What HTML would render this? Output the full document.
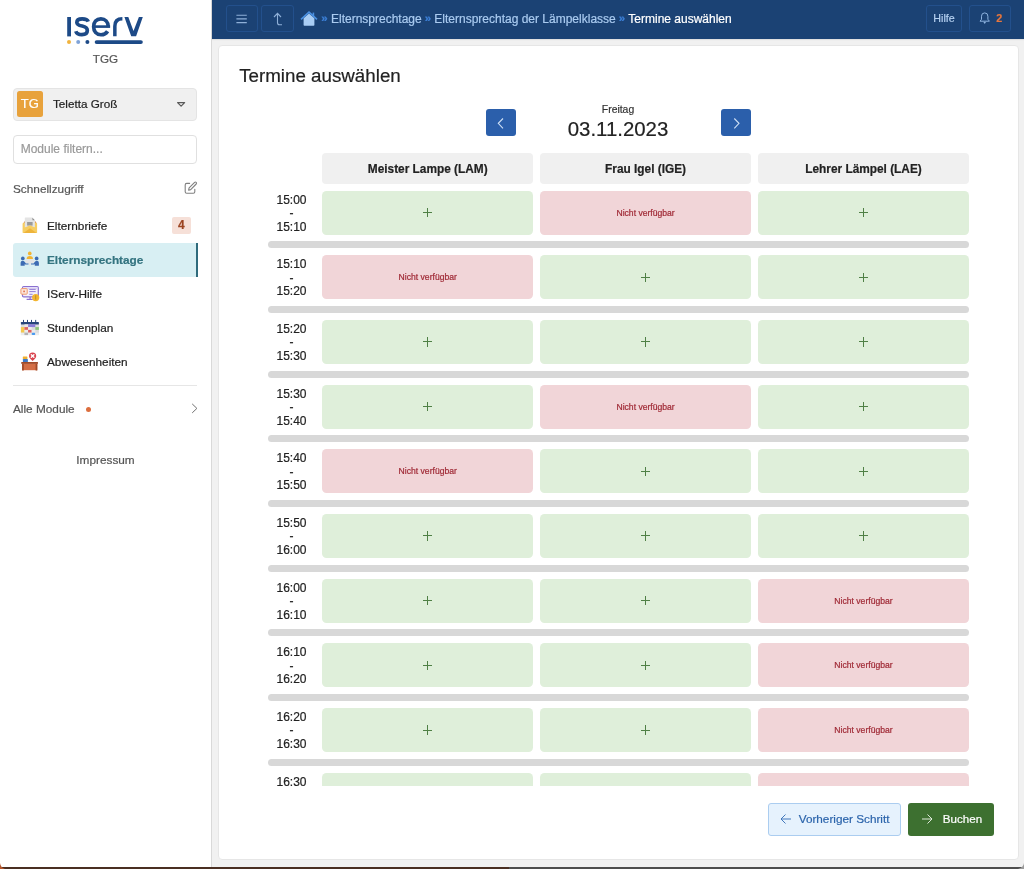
<!DOCTYPE html>
<html><head><meta charset="utf-8">
<style>
*{box-sizing:border-box;margin:0;padding:0}
html,body{width:1024px;height:869px;overflow:hidden;background:#f1f1f1;font-family:"Liberation Sans",sans-serif;color:#222}
body *{-webkit-text-stroke:0.2px currentColor}
.abs{position:absolute}
#side{position:absolute;left:0;top:0;width:212px;height:869px;background:#fff;border-right:1px solid #d9d9d9}
#top{position:absolute;left:212px;top:0;width:812px;height:38.8px;background:#1b4274;box-shadow:0 1px 1px rgba(0,0,0,0.07)}
.tbtn{position:absolute;top:5.2px;height:27.2px;border:1px solid #23508c;border-radius:3px}
#card{position:absolute;left:217.7px;top:44.6px;width:801.3px;height:815.4px;background:#fff;border:1px solid #e6e6e6;border-radius:4px}
.hd{position:absolute;top:153.2px;height:30.6px;background:#f0f0f0;border-radius:4px;font-weight:bold;font-size:11.85px;text-align:center;line-height:32.6px;color:#222}
.cell{position:absolute;height:44.3px;border-radius:4.5px;text-align:center;line-height:44.3px}
.g{background:#dfefda}
.r{background:#f1d5d8;color:#a02a36;font-size:8.6px}
.plus{position:absolute;left:50%;top:50%;width:9.2px;height:9.4px;margin-left:-4.6px;margin-top:-4.7px}
.plus:before{content:"";position:absolute;left:0;top:4.2px;width:9.2px;height:1px;background:#4f8045}
.plus:after{content:"";position:absolute;left:4.1px;top:0;width:1px;height:9.4px;background:#4f8045}
.sep{position:absolute;left:267.6px;width:701.4px;height:6.95px;background:#d8d8d8;border-radius:4px}
.tl{position:absolute;left:262px;width:59px;text-align:center;font-size:12px;line-height:13.6px;padding-top:3px;color:#222}
#clip{position:absolute;left:0;top:0;width:1024px;height:786.4px;overflow:hidden}
.nav{position:absolute;left:13px;width:184.5px;height:34px;font-size:11.8px;line-height:34px}
.nav .t{position:absolute;left:34px;top:0}
.nav svg{position:absolute;left:9px;top:9.5px}
.side-t{position:absolute;font-size:11.8px;color:#555}
.bc{position:absolute;top:10.5px;font-size:12px;line-height:16px;white-space:nowrap}
</style></head><body><div id="wrap" style="position:absolute;left:0;top:0;width:1024px;height:869px;will-change:transform">

<div id="side">
  <!-- logo -->
  <svg class="abs" style="left:60px;top:10px" width="90" height="40" viewBox="60 10 90 40">
    <rect x="67.2" y="17" width="3.8" height="19.4" fill="#1d4a87"/>
    <g fill="none" stroke="#1d4a87" stroke-width="3.7">
      <path d="M88.2 21.6 C87.5 19.7 85.4 18.85 82.2 18.85 C78.9 18.85 76.85 20.2 76.85 22.4 C76.85 24.7 79.3 25.4 82.2 26 C85.6 26.7 87.3 27.8 87.3 30.5 C87.3 33.3 85 34.6 81.9 34.6 C78.6 34.6 76.5 33.4 75.8 31.2"/>
      <path d="M108.2 27.2 V26.6 C108.2 21.9 105.2 18.85 100.9 18.85 C96.4 18.85 93.65 22.2 93.65 26.8 C93.65 31.5 96.6 34.75 101 34.75 C104 34.75 106.2 33.5 107.6 31.2"/>
      <path d="M114.85 36.3 V26.2 C114.85 21.1 117.4 18.8 122.4 18.8" stroke-width="3.5"/>
    </g>
    <rect x="93.6" y="25.3" width="16.5" height="2.6" fill="#1d4a87"/>
    <path d="M124.4 17.1 H128.3 L133.5 30.9 L138.9 17.1 H142.8 L136.1 36.3 H131.2 Z" fill="#1d4a87"/>
    <line x1="96.6" y1="42.1" x2="140.9" y2="42.1" stroke="#1d4a87" stroke-width="3.8" stroke-linecap="round"/>
    <circle cx="69" cy="42.1" r="2" fill="#f1b33d"/>
    <circle cx="78.2" cy="42.1" r="2" fill="#7fa3d8"/>
    <circle cx="87.4" cy="42.1" r="2" fill="#1d4a87"/>
  </svg>
  <div class="side-t" style="left:0;width:211px;text-align:center;top:52px;font-size:11.7px;color:#555">TGG</div>

  <div class="abs" style="left:13.2px;top:87.5px;width:184.3px;height:33.6px;background:#f0f0f0;border:1px solid #e4e4e4;border-radius:4px"></div>
  <div class="abs" style="left:16.9px;top:91.1px;width:25.8px;height:25.8px;background:#e8a23c;border-radius:2.5px;color:#fff;font-size:13px;line-height:26.6px;text-align:center">TG</div>
  <div class="abs" style="left:53px;top:97px;font-size:11.7px;color:#222">Teletta Groß</div>
  <svg class="abs" style="left:172px;top:96px" width="18" height="16" viewBox="172 96 18 16"><path d="M177.6 102.6 H184.6 L181.1 106.1 Z" fill="none" stroke="#5a5a5a" stroke-width="1.25" stroke-linejoin="round"/></svg>

  <div class="abs" style="left:13.1px;top:134.5px;width:184.4px;height:29.3px;border:1px solid #e0e0e0;border-radius:4px"></div>
  <div class="abs" style="left:20.7px;top:142.4px;font-size:12px;color:#9a9a9a">Module filtern...</div>

  <div class="side-t" style="left:13px;top:182px">Schnellzugriff</div>
  <svg class="abs" style="left:180px;top:178px" width="20" height="20" viewBox="180 178 20 20"><g fill="none" stroke="#808080" stroke-width="1.1" stroke-linecap="round" stroke-linejoin="round"><path d="M189.6 183.4 H186.7 Q185.2 183.4 185.2 184.9 V191.7 Q185.2 193.2 186.7 193.2 H193.3 Q194.8 193.2 194.8 191.7 V189.2"/><path d="M188.6 190.2 L189.1 187.9 L194.6 182.4 Q195.4 181.7 196.2 182.4 Q196.9 183.2 196.2 184 L190.7 189.6 Z"/></g></svg>

  <!-- nav -->
  <div class="nav" style="top:208.5px">
    <span class="t">Elternbriefe</span>
    <div class="abs" style="left:159.2px;top:8.6px;width:18.4px;height:16.6px;background:#f6e0d8;border-radius:2px;color:#9c4522;font-weight:bold;font-size:12px;line-height:16.6px;text-align:center">4</div>
  </div>
  <div class="nav" style="top:242.5px;background:#d8eff3;border-radius:3px 0 0 3px;border-right:2px solid #2f6b7c;color:#347480;font-weight:bold">
    <span class="t">Elternsprechtage</span>
  </div>
  <div class="nav" style="top:276.5px">
    <span class="t">IServ-Hilfe</span>
  </div>
  <div class="nav" style="top:310.5px">
    <span class="t">Stundenplan</span>
  </div>
  <div class="nav" style="top:344.5px">
    <span class="t">Abwesenheiten</span>
  </div>

  <svg class="abs" style="left:0;top:200px;z-index:2" width="50" height="180" viewBox="0 200 50 180">
  <!-- envelope -->
  <path d="M22.6 223.5 L25 221.5 H35 L37.1 223.5 V232.6 Q37.1 233.1 36.6 233.1 H23.1 Q22.6 233.1 22.6 232.6Z" fill="#f6cd62"/>
  <path d="M23.9 222.6 L24.8 221.8 M35.2 221.8 L36.2 222.6" stroke="#c0573a" stroke-width="0.9"/>
  <path d="M24.8 218.4 Q24.5 217.6 25.4 217.6 H32.5 L34.9 220 V227.5 H24.8Z" fill="#e4e4e4"/>
  <path d="M32.3 217.8 L34.8 220.3 L32.6 220.3Z" fill="#8a8a8a"/>
  <rect x="27.1" y="222" width="5.5" height="3.6" fill="#9a9a9a"/>
  <path d="M22.9 228.5 L30 225.2 L37 228.5 V233 H23Z" fill="#f6cd62"/>
  <path d="M23.5 233 L30 228.2 L36.5 233Z" fill="#eeb43a"/>
  <!-- group -->
  <circle cx="29.75" cy="253.4" r="1.85" fill="#f2b331"/>
  <path d="M26.6 259.1 Q26.6 256 29.8 256 Q33 256 33 259.1Z" fill="#f2b331"/>
  <ellipse cx="29.75" cy="261.2" rx="4.8" ry="2.3" fill="#e4e4e4"/>
  <rect x="29.2" y="262" width="1.1" height="3.7" fill="#e4e4e4"/>
  <circle cx="22.8" cy="258.4" r="1.85" fill="#3d6bb3"/>
  <circle cx="36.65" cy="258.4" r="1.85" fill="#3d6bb3"/>
  <path d="M20.6 265.7 V262.7 Q20.6 260.7 22.8 260.7 Q24.2 260.7 25.2 262.4 L25.9 263.4 H28.5 V264.6 H25.2 L24.7 264 V265.7Z" fill="#3d6bb3"/>
  <path d="M38.9 265.7 V262.7 Q38.9 260.7 36.7 260.7 Q35.3 260.7 34.3 262.4 L33.6 263.4 H31 V264.6 H34.3 L34.8 264 V265.7Z" fill="#3d6bb3"/>
  <!-- iserv hilfe -->
  <rect x="22.5" y="286.5" width="15.8" height="10.4" rx="1.2" fill="#f3f0fb" stroke="#8a70d0" stroke-width="1.2"/>
  <rect x="23.5" y="287.4" width="14" height="1.8" fill="#dcd3f3"/>
  <path d="M29.3 289.4 H35.7 M29.3 291.6 H35.7 M29.3 294.3 H32.6" stroke="#8a70d0" stroke-width="0.9"/>
  <rect x="20.9" y="288.6" width="6.3" height="5.6" rx="0.8" fill="#fbe6dc" stroke="#ef9a6c" stroke-width="1"/>
  <rect x="23.2" y="290.6" width="1.8" height="1.6" fill="#e37a5a"/>
  <path d="M30.1 297 V298.9 M26.6 299.4 H32.8" stroke="#8a70d0" stroke-width="1.2"/>
  <circle cx="35.7" cy="297.6" r="3.6" fill="#f3b52f"/>
  <path d="M35.7 295.3 V299.6" stroke="#b08a30" stroke-width="0.9"/>
  <!-- stundenplan -->
  <rect x="20.9" y="324.3" width="18" height="10.8" fill="#dcdcdc"/>
  <rect x="20.9" y="321.9" width="18" height="2.5" rx="0.5" fill="#27447a"/>
  <path d="M23.5 319.9 V322 M27.5 319.9 V322 M31.5 319.9 V322 M35.7 319.9 V322" stroke="#27447a" stroke-width="1"/>
  <rect x="24.5" y="324.3" width="3.6" height="2.8" fill="#e8e8e8"/>
  <rect x="28.1" y="324.3" width="7.2" height="2.8" fill="#8a7cd8"/>
  <rect x="20.9" y="327.1" width="3.6" height="5.6" fill="#f4c84e"/>
  <rect x="24.5" y="327.1" width="3.6" height="2.8" fill="#e06060"/>
  <rect x="28.1" y="327.1" width="3.6" height="2.8" fill="#ececec"/>
  <rect x="35.3" y="327.1" width="3.6" height="2.8" fill="#8cc67a"/>
  <rect x="24.5" y="329.9" width="3.6" height="2.8" fill="#ececec"/>
  <rect x="28.1" y="329.9" width="3.6" height="2.8" fill="#e06060"/>
  <rect x="31.7" y="329.9" width="3.6" height="2.8" fill="#ececec"/>
  <rect x="20.9" y="332.7" width="3.6" height="2.4" fill="#ececec"/>
  <rect x="24.5" y="332.7" width="3.6" height="2.4" fill="#b4b4b4"/>
  <rect x="28.1" y="332.7" width="3.6" height="2.4" fill="#ececec"/>
  <rect x="31.7" y="332.7" width="3.6" height="2.4" rx="1" fill="#4a9af0"/>
  <rect x="35.3" y="332.7" width="3.6" height="2.4" fill="#ececec"/>
  <!-- abwesenheiten -->
  <rect x="22.1" y="363.9" width="15.2" height="6.3" fill="#d46e45"/>
  <rect x="22.1" y="363.9" width="1.7" height="6.6" fill="#a04a28"/>
  <rect x="35.6" y="363.9" width="1.7" height="6.6" fill="#a04a28"/>
  <rect x="21.3" y="362" width="16.6" height="1.9" fill="#a04a28"/>
  <rect x="22.8" y="356.5" width="4.6" height="2.5" rx="0.6" fill="#f0b030"/>
  <rect x="22.9" y="359" width="5" height="3.1" rx="0.6" fill="#3d7ac8"/>
  <path d="M29 356 A3.6 3.6 0 1 1 36.2 356 Q36.2 358.2 32.6 360.9 Q29 358.2 29 356Z" fill="#d9434e"/>
  <path d="M31.3 354.7 L33.9 357.3 M33.9 354.7 L31.3 357.3" stroke="#fff" stroke-width="1.4" stroke-linecap="round"/>
</svg>
  <div class="abs" style="left:13px;top:385.3px;width:184.4px;height:1px;background:#e6e6e6"></div>
  <div class="side-t" style="left:13px;top:402px">Alle Module</div>
  <div class="abs" style="left:86.3px;top:406.8px;width:5px;height:5px;border-radius:50%;background:#dc6e3e"></div>
  <svg class="abs" style="left:188px;top:400px" width="12" height="16" viewBox="188 400 12 16"><path d="M192.2 403.9 L196.9 408.4 L192.2 412.9" fill="none" stroke="#707070" stroke-width="1"/></svg>
  <div class="side-t" style="left:0;width:211px;text-align:center;top:453px">Impressum</div>
</div>

<div id="top">
  <div class="tbtn" style="left:13.5px;width:32.5px"></div>
  <div class="tbtn" style="left:49px;width:33px"></div>
</div>
<svg class="abs" style="left:230px;top:10px" width="60" height="20" viewBox="230 10 60 20">
  <path d="M236.4 15.2 H246.8 M236.4 18.9 H246.8 M236.4 22.6 H246.8" stroke="#8fb0d8" stroke-width="1.1"/>
  <path d="M274 17 L277.5 13.3 L281 17 M277.5 13.5 V22.8 Q277.5 24.8 279.5 24.8 H282" fill="none" stroke="#8fb0d8" stroke-width="1.1"/>
</svg>
<svg class="abs" style="left:300px;top:10px" width="18" height="17" viewBox="0 0 18 17">
  <path d="M3.6 8.2 V15 Q3.6 15.8 4.4 15.8 H13.6 Q14.4 15.8 14.4 15 V8.2 L9 3.4Z" fill="#a9cdf4"/>
  <path d="M1 9.3 L9 2.1 L17 9.3" fill="none" stroke="#4a90e2" stroke-width="1.6"/>
  <rect x="12.6" y="2.6" width="1.6" height="3.5" fill="#4a90e2"/>
</svg>
<div class="bc" style="left:321.3px;top:10.3px;color:#3d80d8;font-weight:bold;font-size:11.5px">»</div><div class="bc" style="left:331px;color:#aacbf0">Elternsprechtage</div><div class="bc" style="left:424.8px;top:10.3px;color:#3d80d8;font-weight:bold;font-size:11.5px">»</div><div class="bc" style="left:434.3px;color:#aacbf0">Elternsprechtag der Lämpelklasse</div><div class="bc" style="left:618.8px;top:10.3px;color:#3d80d8;font-weight:bold;font-size:11.5px">»</div><div class="bc" style="left:628.3px;color:#fff">Termine auswählen</div>
<div class="tbtn" style="left:926px;width:36px"></div>
<div class="abs" style="left:926px;top:12px;width:36px;text-align:center;font-size:10.7px;color:#b4d0f0">Hilfe</div>
<div class="tbtn" style="left:968.8px;width:42px"></div>
<svg class="abs" style="left:975px;top:8px" width="20" height="20" viewBox="975 8 20 20"><path d="M980 21.2 L981.5 19.3 V16.2 Q981.5 12.9 984.7 12.9 Q987.9 12.9 987.9 16.2 V19.3 L989.4 21.2 Z" fill="none" stroke="#8fb4e0" stroke-width="1" stroke-linejoin="round"/><path d="M983.4 21.9 L984.7 23.9 L986 21.9Z" fill="#8fb4e0"/></svg>
<div class="abs" style="left:996.2px;top:12px;font-size:10.8px;font-weight:bold;color:#e8763c">2</div>

<div id="card"></div>
<div class="abs" style="left:239.2px;top:65px;font-size:18.75px;color:#222">Termine auswählen</div>

<div class="abs" style="left:485.5px;top:108.7px;width:30.3px;height:27.3px;background:#2b5fab;border-radius:3px"></div>
<svg class="abs" style="left:485.5px;top:108.7px" width="31" height="28" viewBox="0 0 31 28"><path d="M17 9.5 L12.3 14.3 L17 19.3" fill="none" stroke="#cfe0f5" stroke-width="1.1"/></svg>
<div class="abs" style="left:720.6px;top:108.7px;width:30.3px;height:27.3px;background:#2b5fab;border-radius:3px"></div>
<svg class="abs" style="left:720.6px;top:108.7px" width="31" height="28" viewBox="0 0 31 28"><path d="M13.3 9.5 L18 14.3 L13.3 19.3" fill="none" stroke="#cfe0f5" stroke-width="1.1"/></svg>
<div class="abs" style="left:518px;top:104px;width:200px;text-align:center;font-size:10.4px;color:#333">Freitag</div>
<div class="abs" style="left:518px;top:118px;width:200px;text-align:center;font-size:20.4px;color:#222">03.11.2023</div>

<div class="hd" style="left:322.2px;width:211.1px">Meister Lampe (LAM)</div>
<div class="hd" style="left:540px;width:211.2px">Frau Igel (IGE)</div>
<div class="hd" style="left:758px;width:211px">Lehrer Lämpel (LAE)</div>

<div id="clip">
<div class="tl" style="top:190.50px">15:00<br>-<br>15:10</div>
<div class="cell g" style="left:322.2px;width:211.1px;top:190.50px"><span class="plus"></span></div>
<div class="cell r" style="left:540.0px;width:211.2px;top:190.50px">Nicht verfügbar</div>
<div class="cell g" style="left:758.0px;width:211.0px;top:190.50px"><span class="plus"></span></div>
<div class="sep" style="top:241.40px"></div>
<div class="tl" style="top:255.17px">15:10<br>-<br>15:20</div>
<div class="cell r" style="left:322.2px;width:211.1px;top:255.17px">Nicht verfügbar</div>
<div class="cell g" style="left:540.0px;width:211.2px;top:255.17px"><span class="plus"></span></div>
<div class="cell g" style="left:758.0px;width:211.0px;top:255.17px"><span class="plus"></span></div>
<div class="sep" style="top:306.07px"></div>
<div class="tl" style="top:319.84px">15:20<br>-<br>15:30</div>
<div class="cell g" style="left:322.2px;width:211.1px;top:319.84px"><span class="plus"></span></div>
<div class="cell g" style="left:540.0px;width:211.2px;top:319.84px"><span class="plus"></span></div>
<div class="cell g" style="left:758.0px;width:211.0px;top:319.84px"><span class="plus"></span></div>
<div class="sep" style="top:370.74px"></div>
<div class="tl" style="top:384.51px">15:30<br>-<br>15:40</div>
<div class="cell g" style="left:322.2px;width:211.1px;top:384.51px"><span class="plus"></span></div>
<div class="cell r" style="left:540.0px;width:211.2px;top:384.51px">Nicht verfügbar</div>
<div class="cell g" style="left:758.0px;width:211.0px;top:384.51px"><span class="plus"></span></div>
<div class="sep" style="top:435.41px"></div>
<div class="tl" style="top:449.18px">15:40<br>-<br>15:50</div>
<div class="cell r" style="left:322.2px;width:211.1px;top:449.18px">Nicht verfügbar</div>
<div class="cell g" style="left:540.0px;width:211.2px;top:449.18px"><span class="plus"></span></div>
<div class="cell g" style="left:758.0px;width:211.0px;top:449.18px"><span class="plus"></span></div>
<div class="sep" style="top:500.08px"></div>
<div class="tl" style="top:513.85px">15:50<br>-<br>16:00</div>
<div class="cell g" style="left:322.2px;width:211.1px;top:513.85px"><span class="plus"></span></div>
<div class="cell g" style="left:540.0px;width:211.2px;top:513.85px"><span class="plus"></span></div>
<div class="cell g" style="left:758.0px;width:211.0px;top:513.85px"><span class="plus"></span></div>
<div class="sep" style="top:564.75px"></div>
<div class="tl" style="top:578.52px">16:00<br>-<br>16:10</div>
<div class="cell g" style="left:322.2px;width:211.1px;top:578.52px"><span class="plus"></span></div>
<div class="cell g" style="left:540.0px;width:211.2px;top:578.52px"><span class="plus"></span></div>
<div class="cell r" style="left:758.0px;width:211.0px;top:578.52px">Nicht verfügbar</div>
<div class="sep" style="top:629.42px"></div>
<div class="tl" style="top:643.19px">16:10<br>-<br>16:20</div>
<div class="cell g" style="left:322.2px;width:211.1px;top:643.19px"><span class="plus"></span></div>
<div class="cell g" style="left:540.0px;width:211.2px;top:643.19px"><span class="plus"></span></div>
<div class="cell r" style="left:758.0px;width:211.0px;top:643.19px">Nicht verfügbar</div>
<div class="sep" style="top:694.09px"></div>
<div class="tl" style="top:707.86px">16:20<br>-<br>16:30</div>
<div class="cell g" style="left:322.2px;width:211.1px;top:707.86px"><span class="plus"></span></div>
<div class="cell g" style="left:540.0px;width:211.2px;top:707.86px"><span class="plus"></span></div>
<div class="cell r" style="left:758.0px;width:211.0px;top:707.86px">Nicht verfügbar</div>
<div class="sep" style="top:758.76px"></div>
<div class="tl" style="top:772.53px">16:30<br>-<br>16:40</div>
<div class="cell g" style="left:322.2px;width:211.1px;top:772.53px"><span class="plus"></span></div>
<div class="cell g" style="left:540.0px;width:211.2px;top:772.53px"><span class="plus"></span></div>
<div class="cell r" style="left:758.0px;width:211.0px;top:772.53px">Nicht verfügbar</div>
</div>

<div class="abs" style="left:767.5px;top:803.2px;width:133.8px;height:32.6px;background:#e6f2fd;border:1px solid #abcdf0;border-radius:3px"></div>
<svg class="abs" style="left:779px;top:812px" width="14" height="14" viewBox="0 0 14 14"><path d="M12 7 H2 M6.5 2.5 L2 7 L6.5 11.5" fill="none" stroke="#3a72b8" stroke-width="0.95"/></svg>
<div class="abs" style="left:798.7px;top:812px;font-size:11.75px;color:#2b64ab">Vorheriger Schritt</div>
<div class="abs" style="left:908.1px;top:803.2px;width:85.8px;height:32.6px;background:#3d7030;border-radius:3px"></div>
<svg class="abs" style="left:920px;top:812px" width="14" height="14" viewBox="0 0 14 14"><path d="M2 7 H12 M7.5 2.5 L12 7 L7.5 11.5" fill="none" stroke="#e6efe2" stroke-width="0.95"/></svg>
<div class="abs" style="left:942.8px;top:812px;font-size:11.6px;color:#fff">Buchen</div>

<!-- window frame bottom -->
<div class="abs" style="left:0;top:867px;width:509px;height:2px;background:#4a2f22"></div><div class="abs" style="left:509px;top:867px;width:515px;height:2px;background:#4e4e4e"></div><svg class="abs" style="left:1016px;top:863px" width="8" height="6" viewBox="0 0 8 6"><path d="M8 0 Q7.5 4.5 2 6 H8Z" fill="#9a9a9a"/></svg><svg class="abs" style="left:0;top:863px" width="6" height="6" viewBox="0 0 6 6"><path d="M0 0 Q0.5 4.5 5 6 H0Z" fill="#b4572d"/></svg>
</div></body></html>
